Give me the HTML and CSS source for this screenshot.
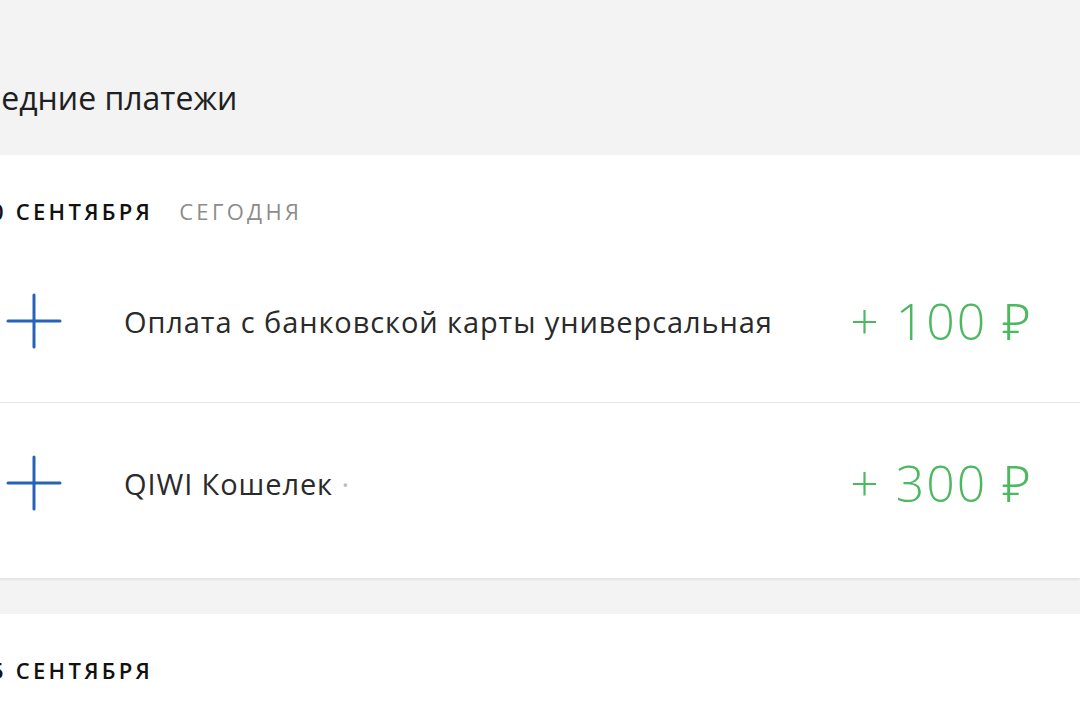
FILE: index.html
```html
<!DOCTYPE html>
<html lang="ru">
  <head>
    <meta charset="UTF-8" />
    <meta name="viewport" content="width=device-width, initial-scale=1.0" />
    <title>Последние платежи</title>
    <link rel="stylesheet" href="styles.css">
  </head>
  <body>
    <div class="page">
      <h2 class="title">Последние платежи</h2>

      <section class="day">
        <div class="day-head">
          <span class="day-date">20 сентября</span>
          <span class="day-note">сегодня</span>
        </div>

        <div class="payment">
          <div class="payment-icon">
            <svg width="56" height="56" viewBox="0 0 56 56">
              <path d="M28 2V54M2 28H54" stroke="#2762b9" stroke-width="3" stroke-linecap="round" fill="none" />
            </svg>
          </div>
          <div class="payment-name">Оплата с банковской карты универсальная</div>
          <div class="payment-sum">+ 100 ₽</div>
        </div>

        <div class="payment">
          <div class="payment-icon">
            <svg width="56" height="56" viewBox="0 0 56 56">
              <path d="M28 2V54M2 28H54" stroke="#2762b9" stroke-width="3" stroke-linecap="round" fill="none" />
            </svg>
          </div>
          <div class="payment-name">QIWI Кошелек <span class="hidden-part">·</span></div>
          <div class="payment-sum">+ 300 ₽</div>
        </div>
      </section>

      <section class="day day-last">
        <div class="day-head">
          <span class="day-date">15 сентября</span>
        </div>
      </section>
    </div>
  </body>
</html>
```

FILE: styles.css
```css
html,
body {
  margin: 0;
  height: 100%;
  overflow: hidden;
}
body {
  background: #f3f3f3;
  font-family: "Open Sans", "Noto Sans", Arial, sans-serif;
  color: #222;
}
.page {
  margin-left: -25px;
}
.title {
  margin: 0 0 0 -50px;
  height: 155px;
  box-sizing: border-box;
  padding-top: 76px;
  font-size: 32px;
  line-height: 44px;
  font-weight: 400;
  color: #1f1f1f;
}
.day {
  background: #fff;
  padding-bottom: 15px;
  margin-bottom: 36px;
  box-shadow: 0 2px 2px rgba(0, 0, 0, 0.07);
}
.day-last {
  margin-bottom: 0;
  padding-bottom: 26px;
  box-shadow: none;
}
.day-head {
  padding-top: 41px;
  height: 30px;
  line-height: 30px;
  text-transform: uppercase;
  font-size: 22px;
  letter-spacing: 3.3px;
}
.day-date {
  font-weight: 600;
  color: #111;
}
.day-note {
  margin-left: 17px;
  color: #8c8c8c;
}
.payment {
  display: flex;
  align-items: center;
  height: 162px;
  padding-right: 47px;
}
.day-head + .payment {
  margin-top: 14px;
}
.payment + .payment {
  height: 160px;
  border-top: 1px solid #e6e6e6;
}
.payment-icon {
  width: 56px;
  height: 56px;
  margin-left: 31px;
}
.payment-name {
  flex: 1;
  margin-left: 62px;
  font-size: 29px;
  letter-spacing: 0.9px;
  color: #2a2a2a;
  white-space: nowrap;
}
.hidden-part {
  color: #bbb;
}
.payment-sum {
  font-size: 50px;
  font-weight: 300;
  letter-spacing: 2px;
  color: #4cb860;
  white-space: nowrap;
}
```
